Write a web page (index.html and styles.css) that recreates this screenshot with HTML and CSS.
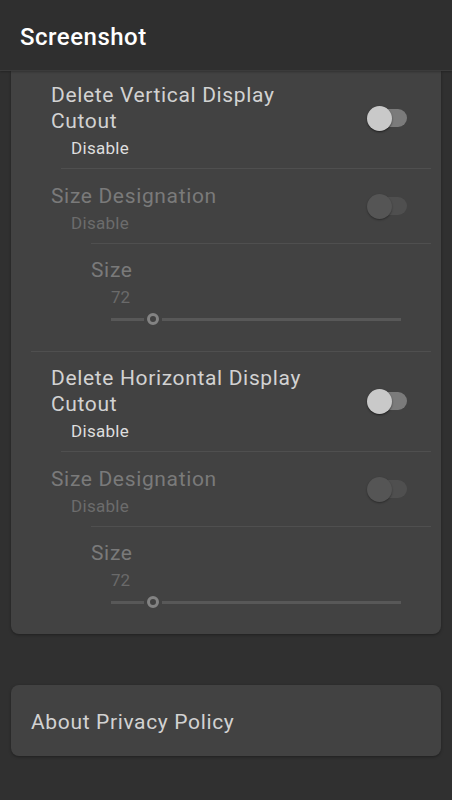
FILE: index.html
```html
<!DOCTYPE html>
<html>
<head>
<meta charset="utf-8">
<link rel="stylesheet" href="styles.css">
</head>
<body>
<header class="appbar"><h1 class="appbar-title">Screenshot</h1></header>
<main class="content">
  <section class="card card-scrolled">
    <div class="group">
      <div class="pref">
        <div class="pref-text">
          <div class="pref-title">Delete Vertical Display<br>Cutout</div>
          <div class="pref-summary">Disable</div>
        </div>
        <span class="switch"><span class="switch-track"></span><span class="switch-thumb"></span></span>
      </div>
      <div class="divider divider-l1"></div>
      <div class="pref pref-disabled">
        <div class="pref-text">
          <div class="pref-title">Size Designation</div>
          <div class="pref-summary">Disable</div>
        </div>
        <span class="switch switch-disabled"><span class="switch-track"></span><span class="switch-thumb"></span></span>
      </div>
      <div class="divider divider-l2"></div>
      <div class="pref-slider">
        <div class="pref-title">Size</div>
        <div class="slider-value">72</div>
        <div class="slider">
          <span class="slider-track" style="width:33px"></span>
          <span class="slider-thumb"></span>
          <span class="slider-track slider-track-rest"></span>
        </div>
      </div>
    </div>
    <div class="divider divider-group"></div>
    <div class="group">
      <div class="pref">
        <div class="pref-text">
          <div class="pref-title">Delete Horizontal Display<br>Cutout</div>
          <div class="pref-summary">Disable</div>
        </div>
        <span class="switch"><span class="switch-track"></span><span class="switch-thumb"></span></span>
      </div>
      <div class="divider divider-l1"></div>
      <div class="pref pref-disabled">
        <div class="pref-text">
          <div class="pref-title">Size Designation</div>
          <div class="pref-summary">Disable</div>
        </div>
        <span class="switch switch-disabled"><span class="switch-track"></span><span class="switch-thumb"></span></span>
      </div>
      <div class="divider divider-l2"></div>
      <div class="pref-slider">
        <div class="pref-title">Size</div>
        <div class="slider-value">72</div>
        <div class="slider">
          <span class="slider-track" style="width:33px"></span>
          <span class="slider-thumb"></span>
          <span class="slider-track slider-track-rest"></span>
        </div>
      </div>
    </div>
  </section>
  <section class="card card-link">
    <div class="link-title">About Privacy Policy</div>
  </section>
</main>
</body>
</html>
```
FILE: styles.css
```css
* { box-sizing: border-box; }
html, body {
  margin: 0;
  padding: 0;
  background: #303030;
  font-family: Roboto, "Noto Sans", sans-serif;
  height: 100%;
  overflow: hidden;
}
.appbar {
  height: 71px;
  background: #2f2f2f;
  border-bottom: 1px solid #3b3b3b;
  display: flex;
  align-items: center;
  padding-left: 20px;
  position: relative;
  z-index: 2;
  box-shadow: 0 1px 2px rgba(0,0,0,0.25);
}
.appbar-title {
  margin: 0;
  font-size: 24px;
  font-weight: 500;
  color: #ffffff;
  letter-spacing: 0.5px;
  padding-top: 4px;
}
.content {
  padding: 0 11px;
}
.card {
  background: #424242;
  border-radius: 8px;
  box-shadow: 0 1px 3px rgba(0,0,0,0.35);
}
.card-scrolled {
  border-radius: 0 0 8px 8px;
  padding-top: 11px;
}
.pref {
  display: flex;
  align-items: center;
  padding: 14px 34px 9px 40px;
}
.group > .pref:first-child { padding-top: 0; }
.pref-text { flex: 1; }
.pref-title {
  font-size: 21px;
  line-height: 26px;
  letter-spacing: 0.65px;
  color: #d2d2d2;
}
.pref-summary {
  font-size: 17px;
  line-height: 22px;
  letter-spacing: 0.3px;
  margin-top: 3px;
  padding-left: 20px;
  color: #dedede;
}
.pref-disabled .pref-title { color: #7a7a7a; }
.pref-disabled .pref-summary { color: #6c6c6c; }
.divider {
  height: 1px;
  background: #4f4f4f;
  margin-right: 10px;
}
.divider-l1 { margin-left: 50px; }
.divider-l2 { margin-left: 80px; }
.divider-group { margin-left: 20px; margin-bottom: 13px; }
.switch {
  position: relative;
  width: 40px;
  height: 26px;
  flex: none;
  margin-top: -6px;
}
.switch-track {
  position: absolute;
  left: 4px;
  right: 0;
  top: 4px;
  height: 18px;
  border-radius: 9px;
  background: #7b7b7b;
}
.switch-thumb {
  position: absolute;
  left: 0;
  top: 1px;
  width: 25px;
  height: 25px;
  border-radius: 50%;
  background: #c9c9c9;
  box-shadow: 0 1px 2px rgba(0,0,0,0.55);
}
.switch-disabled .switch-track { background: #4f4f4f; }
.switch-disabled .switch-thumb { background: #555555; box-shadow: 0 1px 2px rgba(0,0,0,0.35); }
.pref-slider {
  padding: 13px 40px 22px 80px;
}
.pref-slider .pref-title { color: #7a7a7a; }
.slider-value {
  font-size: 17px;
  line-height: 20px;
  margin-top: 4px;
  padding-left: 20px;
  color: #6a6a6a;
}
.slider {
  display: flex;
  align-items: center;
  height: 20px;
  margin-top: 2px;
  margin-left: 20px;
}
.slider-track {
  height: 3px;
  background: #585858;
}
.slider-track-rest { flex: 1; }
.slider-thumb {
  width: 12px;
  height: 12px;
  border-radius: 50%;
  border: 3px solid #838383;
  background: #424242;
  margin: 0 3px;
  flex: none;
}
.card-link {
  margin-top: 51px;
  height: 71px;
  display: flex;
  align-items: center;
  padding-left: 20px;
  padding-top: 3px;
}
.link-title {
  font-size: 21px;
  letter-spacing: 0.65px;
  color: #d2d2d2;
}
```
